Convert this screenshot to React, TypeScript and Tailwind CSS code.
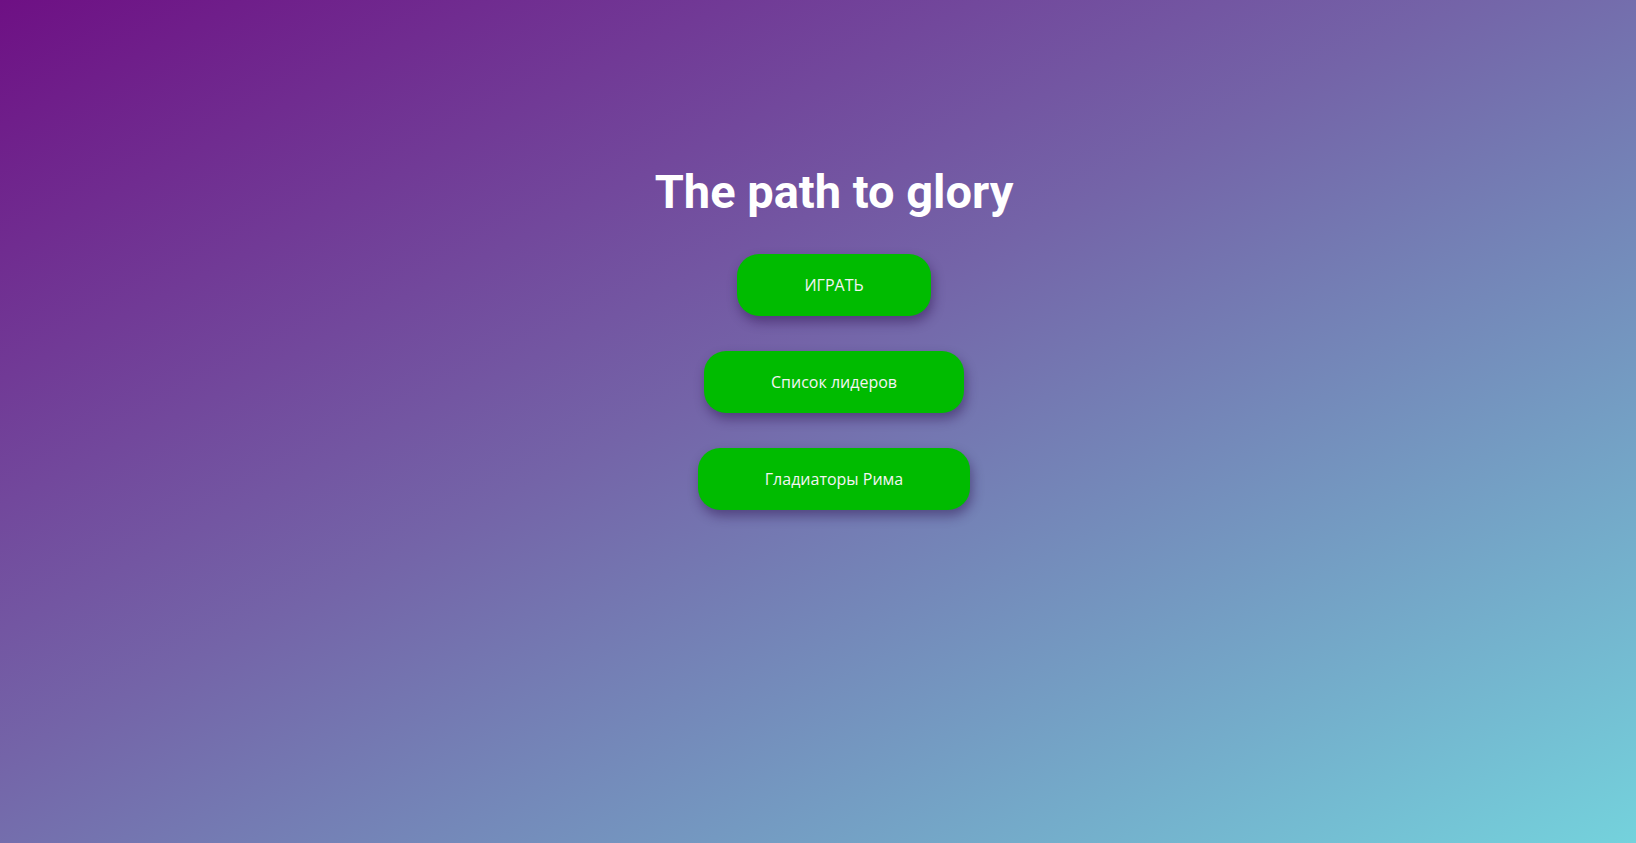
import React from 'react';

const menuItems = ['ИГРАТЬ', 'Список лидеров', 'Гладиаторы Рима'];

const MenuButton: React.FC<{ label: string }> = ({ label }) => (
    <button
        className="h-[62px] px-[67px] rounded-[22px] bg-[#00bb00] text-[#f4f4f4] text-[16px] font-['Open_Sans',sans-serif] shadow-[2px_6px_12px_rgba(40,10,70,0.45)] cursor-pointer"
    >
        {label}
    </button>
);

const App: React.FC = () => {
    return (
        <div className="w-full h-[843px] pl-[32px] bg-[linear-gradient(to_bottom_right,#6e1084,#7464a8_45%,#74d2dc)] flex flex-col items-center">
            <h1 className="mt-[164px] text-white text-[47px] leading-[56px] font-bold font-['Roboto',sans-serif]">
                The path to glory
            </h1>
            <div className="mt-[34px] flex flex-col items-center gap-[35px]">
                {menuItems.map(item => (
                    <MenuButton key={item} label={item} />
                ))}
            </div>
        </div>
    );
};

export default App;
